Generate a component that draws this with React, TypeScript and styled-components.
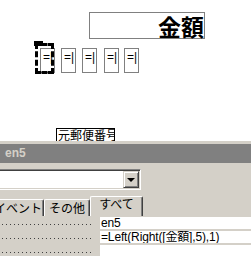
import React from 'react';
import styled, { createGlobalStyle } from 'styled-components';

const GlobalStyle = createGlobalStyle`
  html, body {
    margin: 0;
    padding: 0;
    width: 251px;
    height: 256px;
    overflow: hidden;
    background: #d4d0c8;
    font-family: 'Liberation Sans', 'Noto Sans CJK JP', sans-serif;
  }
`;

const Canvas = styled.div`
  position: relative;
  height: 141px;
  background: #fff;
  overflow: hidden;
`;

const Label = styled.div`
  position: absolute;
  left: 89px;
  top: 12px;
  width: 114px;
  height: 25px;
  border: 1px solid #808080;
  display: flex;
  justify-content: flex-end;
  align-items: flex-end;
  font-family: 'Noto Sans CJK JP', sans-serif;
  font-weight: 700;
  font-size: 23px;
  line-height: 23px;
  color: #000;
`;

const CharBox = styled.div<{ $x: number }>`
  position: absolute;
  left: ${(p) => p.$x}px;
  top: 48px;
  width: 15px;
  height: 25px;
  border: 1px solid #808080;
  padding: 1px 0 0 2px;
  box-sizing: border-box;
  font-size: 12px;
  line-height: 14px;
  color: #000;
  overflow: hidden;
  white-space: nowrap;
`;

const Selection = styled.div`
  position: absolute;
  left: 35px;
  top: 43px;
  width: 19px;
  height: 31px;
  box-sizing: border-box;
  border: 3px dashed #000;
`;

const MoveHandle = styled.div`
  position: absolute;
  left: 34px;
  top: 41px;
  width: 9px;
  height: 5px;
  background: #000;
`;

const FieldBox = styled.div`
  position: absolute;
  left: 56px;
  top: 128px;
  width: 56px;
  height: 12px;
  border: 1px solid #000;
  font-family: 'Noto Sans CJK JP', sans-serif;
  font-size: 12px;
  line-height: 12px;
  padding-left: 1px;
  white-space: nowrap;
  overflow: hidden;
  color: #000;
`;

const Splitter = styled.div`
  height: 3px;
  background: #d4d0c8;
`;

const TitleBar = styled.div`
  height: 19px;
  background: #808080;
  color: #d4d0c8;
  font-weight: 700;
  font-size: 12px;
  line-height: 19px;
  padding-left: 5px;
`;

const Sheet = styled.div`
  padding-top: 6px;
`;

const Combo = styled.div`
  display: flex;
  width: 143px;
  height: 21px;
  margin-left: -2px;
  box-sizing: border-box;
  background: #fff;
  border-top: 1px solid #808080;
  border-left: 1px solid #808080;
  border-right: 1px solid #fff;
  border-bottom: 1px solid #fff;
  box-shadow: inset 1px 1px 0 #404040, inset -1px -1px 0 #d4d0c8;
  padding: 1px;
`;

const ComboField = styled.div`
  flex: 1;
`;

const DropButton = styled.div`
  width: 16px;
  background: #d4d0c8;
  box-sizing: border-box;
  border-top: 1px solid #d4d0c8;
  border-left: 1px solid #d4d0c8;
  border-right: 1px solid #404040;
  border-bottom: 1px solid #404040;
  box-shadow: inset 1px 1px 0 #fff, inset -1px -1px 0 #808080;
  display: flex;
  align-items: center;
  justify-content: center;
`;

const Arrow = styled.div`
  width: 0;
  height: 0;
  border-left: 4px solid transparent;
  border-right: 4px solid transparent;
  border-top: 4px solid #000;
`;

const TabStrip = styled.div`
  display: flex;
  align-items: flex-end;
  height: 21px;
  margin-top: 5px;
  margin-left: -8px;
`;

const Tab = styled.div<{ $active?: boolean; $w: number }>`
  width: ${(p) => p.$w}px;
  flex: none;
  height: ${(p) => (p.$active ? 20 : 17)}px;
  box-sizing: border-box;
  border-top: 1px solid #fff;
  border-left: 1px solid #fff;
  border-right: 1px solid #404040;
  box-shadow: inset -1px 0 0 #808080;
  border-radius: 2px 2px 0 0;
  font-family: 'Noto Sans CJK JP', sans-serif;
  font-size: 12px;
  text-align: center;
  line-height: ${(p) => (p.$active ? 14 : 15)}px;
  color: #000;
  white-space: nowrap;
`;

const Rows = styled.div`
  padding-top: 1px;
`;

const PropRow = styled.div`
  display: grid;
  grid-template-columns: 100px 1fr;
  height: 14px;
`;

const PropName = styled.div`
  background-image: linear-gradient(to right, #404040 1px, transparent 1px);
  background-size: 4px 1px;
  background-repeat: repeat-x;
  background-position: 2px 7px;
  margin-right: 7px;
`;

const PropValue = styled.div`
  background: #fff;
  height: 12px;
  padding-left: 1px;
  font-size: 12px;
  line-height: 12px;
  letter-spacing: -0.15px;
  color: #000;
  white-space: nowrap;
  overflow: hidden;
`;

const charBoxes = [40, 61, 82, 104, 124];

const props = ['en5', '=Left(Right([金額],5),1)', ''];

export default function App() {
  return (
    <>
      <GlobalStyle />
      <Canvas>
        <Label>金額</Label>
        {charBoxes.map((x) => (
          <CharBox key={x} $x={x}>
            =|
          </CharBox>
        ))}
        <Selection />
        <MoveHandle />
        <FieldBox>元郵便番号</FieldBox>
      </Canvas>
      <Splitter />
      <TitleBar>en5</TitleBar>
      <Sheet>
        <Combo>
          <ComboField />
          <DropButton>
            <Arrow />
          </DropButton>
        </Combo>
        <TabStrip>
          <Tab $w={52}>イベント</Tab>
          <Tab $w={46}>その他</Tab>
          <Tab $w={53} $active>
            すべて
          </Tab>
        </TabStrip>
        <Rows>
          {props.map((v, i) => (
            <PropRow key={i}>
              <PropName />
              <PropValue>{v}</PropValue>
            </PropRow>
          ))}
        </Rows>
      </Sheet>
    </>
  );
}
